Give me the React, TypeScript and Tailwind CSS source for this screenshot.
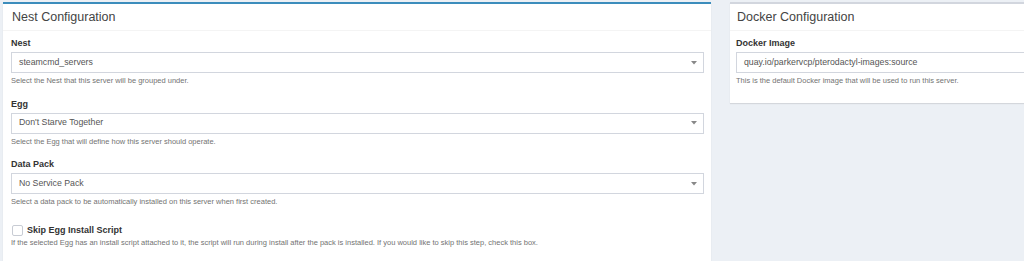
import React from "react";

interface IField {
  label: string;
  value: string;
  help: string;
  select?: boolean;
}

function Caret() {
  return (
    <svg width="6" height="4" viewBox="0 0 6 4" className="shrink-0">
      <path d="M0 0 L6 0 L3 3.5 Z" fill="#888" />
    </svg>
  );
}

function Field({ label, value, help, select = true }: IField) {
  return (
    <div className="mb-[11.5px]">
      <p className="h-[12px] text-[9px] leading-[12px] font-bold text-[#333]">{label}</p>
      <div className="mt-[3px] flex h-[21px] items-center justify-between border border-[#d2d6de] bg-white pl-[7px] pr-[6px]">
        <span className="text-[8.75px] text-[#555] whitespace-nowrap">{value}</span>
        {select && <Caret />}
      </div>
      <p className="mt-[3px] h-[10px] text-[7.5px] leading-[10px] text-[#737373] whitespace-nowrap">
        {help}
      </p>
    </div>
  );
}

function BoxHeader({ title, padLeft }: { title: string; padLeft: string }) {
  return (
    <div className={`flex h-[27px] items-center border-b border-[#f4f4f4] ${padLeft}`}>
      <h3 className="text-[12.5px] text-[#444] leading-none">{title}</h3>
    </div>
  );
}

export default function App() {
  return (
    <div className="flex h-[261px] w-[1024px] overflow-hidden bg-[#ecf0f5] pl-[3px] pt-[2px] font-['Liberation_Sans',Arial,sans-serif]">
      {/* nest config */}
      <div className="w-[708px] shrink-0 border-t-2 border-[#3c8dbc] bg-white shadow-[0_1px_1px_rgba(0,0,0,0.1)]">
        <BoxHeader title="Nest Configuration" padLeft="pl-[9px]" />
        <div className="pl-[8px] pr-[7px] pt-[6px]">
          <Field
            label="Nest"
            value="steamcmd_servers"
            help="Select the Nest that this server will be grouped under."
          />
          <Field
            label="Egg"
            value="Don't Starve Together"
            help="Select the Egg that will define how this server should operate."
          />
          <Field
            label="Data Pack"
            value="No Service Pack"
            help="Select a data pack to be automatically installed on this server when first created."
          />
          <div className="mt-[17.5px] flex h-[12px] items-center">
            <span className="ml-[1px] h-[11px] w-[11px] rounded-[2px] border border-[#c8ccd4] bg-white" />
            <span className="ml-[4px] text-[9px] font-bold text-[#333]">Skip Egg Install Script</span>
          </div>
          <p className="mt-[1px] text-[7.5px] leading-[10px] text-[#737373] whitespace-nowrap">
            If the selected Egg has an install script attached to it, the script will run during install after the
            pack is installed. If you would like to skip this step, check this box.
          </p>
        </div>
      </div>

      {/* docker config */}
      <div className="ml-[19px] h-[101px] w-[310px] shrink-0 border-t-2 border-[#d2d6de] bg-white shadow-[0_1px_1px_rgba(0,0,0,0.1)]">
        <BoxHeader title="Docker Configuration" padLeft="pl-[7px]" />
        <div className="pl-[6px] pt-[6px]">
          <Field
            label="Docker Image"
            value="quay.io/parkervcp/pterodactyl-images:source"
            help="This is the default Docker image that will be used to run this server."
            select={false}
          />
        </div>
      </div>
    </div>
  );
}
